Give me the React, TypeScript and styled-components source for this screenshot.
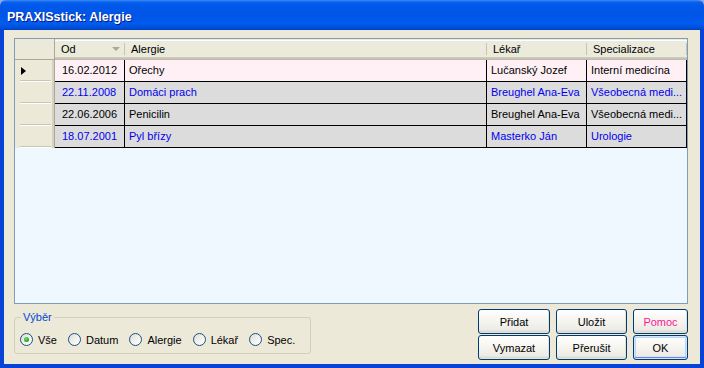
import React from "react";
import styled, { createGlobalStyle } from "styled-components";

const GlobalStyle = createGlobalStyle`
	html,
	body {
		margin: 0;
		padding: 0;
		background: #8fa8e6;
	}

	body {
		font-family: "Liberation Sans", Arial, sans-serif;
		font-size: 11px;
		font-weight: 400;
	}
`;

interface Allergy {
	date: string;
	name: string;
	doctor: string;
	specialty: string;
	blue?: boolean;
	current?: boolean;
}

const allergies: Allergy[] = [
	{ date: "16.02.2012", name: "Ořechy", doctor: "Lučanský Jozef", specialty: "Interní medicína", current: true },
	{ date: "22.11.2008", name: "Domáci prach", doctor: "Breughel Ana-Eva", specialty: "Všeobecná medi...", blue: true },
	{ date: "22.06.2006", name: "Penicilin", doctor: "Breughel Ana-Eva", specialty: "Všeobecná medi..." },
	{ date: "18.07.2001", name: "Pyl břízy", doctor: "Masterko Ján", specialty: "Urologie", blue: true }
];

const COLUMNS = [
	{ title: "Od", width: 70 },
	{ title: "Alergie", width: 362 },
	{ title: "Lékař", width: 100 },
	{ title: "Specializace", width: 100 }
];

const FILTERS = ["Vše", "Datum", "Alergie", "Lékař", "Spec."];

const Window = styled.div`
	width: 704px;
	height: 368px;
	display: flex;
	flex-direction: column;
	box-sizing: border-box;
`;

const TitleBar = styled.div`
	height: 30px;
	flex: none;
	display: flex;
	align-items: center;
	padding: 3px 0 0 7px;
	box-sizing: border-box;
	border-radius: 6px 6px 0 0;
	background: linear-gradient(
		180deg,
		#3d8cf5 0,
		#0a62ee 2px,
		#0058ea 5px,
		#0055e6 50%,
		#005bef 80%,
		#004fd8 92%,
		#0040c0 100%
	);
`;

const Title = styled.span`
	color: #ffffff;
	font-weight: bold;
	font-size: 12.5px;
	text-shadow: 1px 1px 0 #0a1883;
`;

const Frame = styled.div`
	flex: 1;
	display: flex;
	flex-direction: column;
	background: #ece9d8;
	border: 4px solid #0842d6;
	border-top: 0;
	padding: 8px 12px 0 10px;
`;

const Grid = styled.div`
	height: 266px;
	flex: none;
	box-sizing: border-box;
	border: 1px solid #7f9db9;
	background: #f0f8ff;
	display: flex;
	flex-direction: column;
	overflow: hidden;
`;

const HeaderRow = styled.div`
	display: flex;
	height: 21px;
	flex: none;
`;

const CornerCell = styled.div`
	width: 40px;
	flex: none;
	box-sizing: border-box;
	background: #ece9d8;
	border-right: 1px solid #aca899;
	border-bottom: 1px solid #aca899;
`;

const HeadCell = styled.div<{ $width: number }>`
	width: ${(p) => p.$width}px;
	flex: none;
	box-sizing: border-box;
	position: relative;
	display: flex;
	align-items: center;
	justify-content: space-between;
	padding: 0 6px 2px 6px;
	color: #000;
	background: linear-gradient(
		180deg,
		#ece9d8 0,
		#ece9d8 1px,
		#ffffff 1px,
		#ffffff 2px,
		#ebeadb 2px,
		#ebeadb 18px,
		#d6d2c2 18px,
		#cbc7b8 19px,
		#c1bdae 20px
	);

	&::after {
		content: "";
		position: absolute;
		right: 0;
		top: 4px;
		bottom: 5px;
		width: 1px;
		background: #c7c5b2;
		box-shadow: 1px 0 0 #ffffff;
	}
`;

const SortArrow = styled.span`
	width: 0;
	height: 0;
	border-left: 4px solid transparent;
	border-right: 4px solid transparent;
	border-top: 4px solid #aca899;
	margin-right: -1px;
`;

const DataRow = styled.div`
	display: flex;
	height: 22px;
	flex: none;
`;

const RowHead = styled.div`
	width: 40px;
	flex: none;
	box-sizing: border-box;
	position: relative;
	display: flex;
	align-items: center;
	padding-left: 6px;
	background: #ece9d8;
	box-shadow: inset -1px 0 0 #aca899, inset -3px 0 0 #d6d2c2;

	&::after {
		content: "";
		position: absolute;
		left: 5px;
		right: 4px;
		bottom: 0;
		height: 0;
		border-top: 1px solid #c9c5b5;
		border-bottom: 1px solid #ffffff;
	}
`;

const CurrentMarker = styled.span`
	width: 0;
	height: 0;
	border-top: 4px solid transparent;
	border-bottom: 4px solid transparent;
	border-left: 5px solid #000;
`;

const Cell = styled.div<{ $width: number; $current?: boolean; $blue?: boolean }>`
	width: ${(p) => p.$width}px;
	flex: none;
	box-sizing: border-box;
	padding: 0 2px 0 4px;
	line-height: 21px;
	border-right: 1px solid #000;
	border-bottom: 1px solid #000;
	background: ${(p) => (p.$current ? "#fff0f5" : "#dcdcdc")};
	color: ${(p) => (p.$blue ? "#0000f0" : "#000")};
	white-space: nowrap;
	overflow: hidden;
`;

const DateCell = styled(Cell)`
	padding-left: 7px;
`;

const Footer = styled.div`
	display: flex;
	justify-content: space-between;
	align-items: flex-start;
`;

const GroupBox = styled.fieldset`
	margin: 7px 0 0 0;
	width: 297px;
	box-sizing: border-box;
	border: 1px solid #d0d0bf;
	border-radius: 3px;
	padding: 9px 5px 7px 5px;
	display: flex;
	gap: 11px;
`;

const Legend = styled.legend`
	color: #0046d5;
	font-size: 11px;
	line-height: 13px;
	padding: 0 2px;
	margin-left: 1px;
`;

const RadioItem = styled.label`
	display: flex;
	align-items: center;
	gap: 5px;
	height: 13px;
	color: #000;
	font-weight: 400;
`;

const RadioCircle = styled.span<{ $checked?: boolean }>`
	width: 13px;
	height: 13px;
	box-sizing: border-box;
	border-radius: 50%;
	border: 1px solid #1c5180;
	background: linear-gradient(135deg, #dcdcd7 0%, #f0f0ec 50%, #ffffff 100%);
	display: flex;
	align-items: center;
	justify-content: center;

	&::after {
		content: "";
		width: 5px;
		height: 5px;
		border-radius: 50%;
		background: ${(p) =>
			p.$checked ? "radial-gradient(circle at 40% 35%, #6fe06a 0%, #21a121 70%)" : "transparent"};
	}
`;

const ButtonGrid = styled.div`
	display: grid;
	grid-template-columns: 72px 71px 55px;
	column-gap: 6px;
	row-gap: 1px;
	margin-top: 5px;
`;

const Button = styled.button<{ $default?: boolean; $accent?: string }>`
	height: 25px;
	padding: 0;
	box-sizing: border-box;
	border: 1px solid #003c74;
	border-radius: 3px;
	font-family: "Liberation Sans", Arial, sans-serif;
	font-size: 11px;
	font-weight: 400;
	color: ${(p) => p.$accent ?? "#000"};
	background: linear-gradient(180deg, #ffffff 0%, #f6f5f0 45%, #ecebe6 85%, #d6d0c5 100%);
	box-shadow: ${(p) =>
		p.$default
			? "inset 0 0 0 1px #cee7ff, inset 0 -1px 0 1px #6982ee, inset 0 0 0 2px #bcd4f6"
			: "inset -1px -1px 0 #e3e0d6"};
`;

export default function App() {
	return (
		<>
			<GlobalStyle />
			<Window>
				<TitleBar>
					<Title>PRAXISstick: Alergie</Title>
				</TitleBar>
				<Frame>
					<Grid>
						<HeaderRow>
							<CornerCell />
							{COLUMNS.map((col, i) => (
								<HeadCell key={col.title} $width={col.width}>
									<span>{col.title}</span>
									{i === 0 && <SortArrow />}
								</HeadCell>
							))}
						</HeaderRow>
						{allergies.map((row) => (
							<DataRow key={row.date}>
								<RowHead>{row.current && <CurrentMarker />}</RowHead>
								<DateCell $width={COLUMNS[0].width} $current={row.current} $blue={row.blue}>
									{row.date}
								</DateCell>
								<Cell $width={COLUMNS[1].width} $current={row.current} $blue={row.blue}>
									{row.name}
								</Cell>
								<Cell $width={COLUMNS[2].width} $current={row.current} $blue={row.blue}>
									{row.doctor}
								</Cell>
								<Cell $width={COLUMNS[3].width} $current={row.current} $blue={row.blue}>
									{row.specialty}
								</Cell>
							</DataRow>
						))}
					</Grid>
					<Footer>
						<GroupBox>
							<Legend>Výběr</Legend>
							{FILTERS.map((f, i) => (
								<RadioItem key={f}>
									<RadioCircle $checked={i === 0} />
									{f}
								</RadioItem>
							))}
						</GroupBox>
						<ButtonGrid>
							<Button>Přidat</Button>
							<Button>Uložit</Button>
							<Button $accent="#ff1493">Pomoc</Button>
							<Button>Vymazat</Button>
							<Button>Přerušit</Button>
							<Button $default>OK</Button>
						</ButtonGrid>
					</Footer>
				</Frame>
			</Window>
		</>
	);
}
